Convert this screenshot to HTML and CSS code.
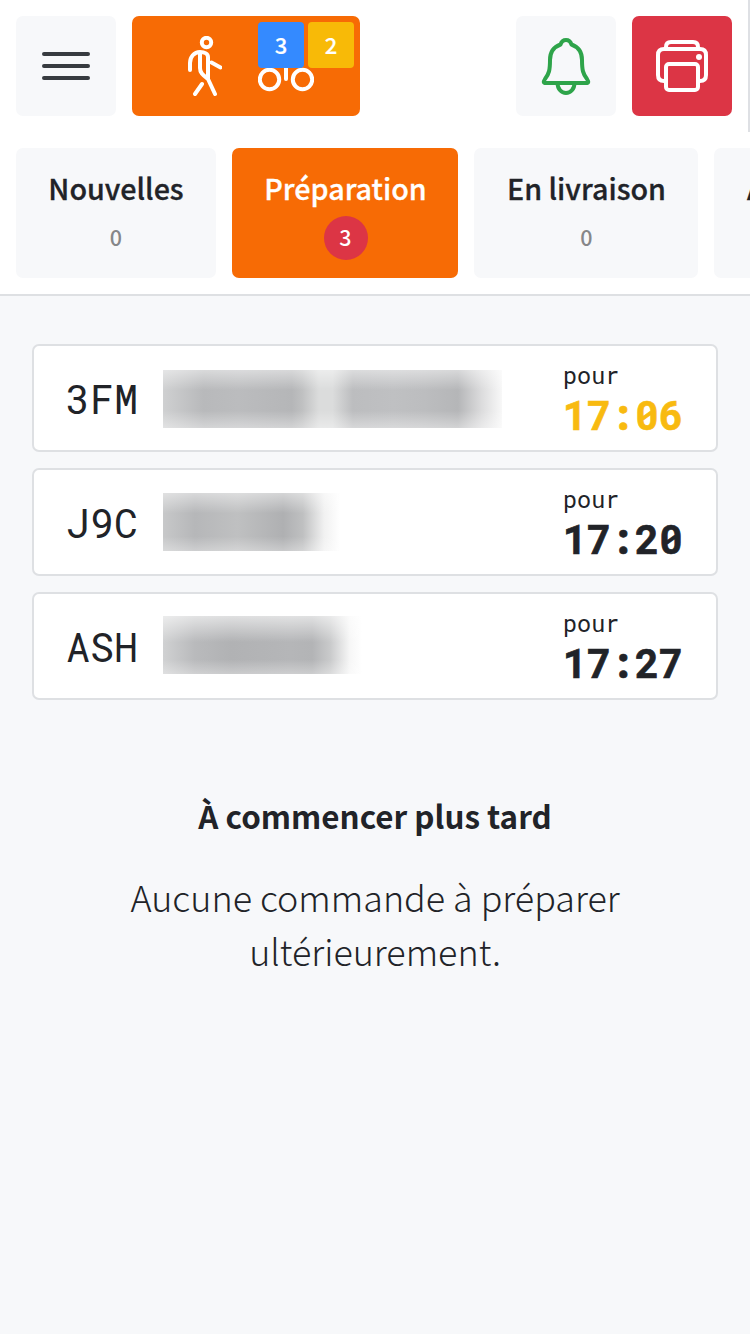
FILE: index.html
```html
<!DOCTYPE html>
<html lang="fr">
<head>
  <meta charset="utf-8">
  <title>Commandes</title>
  <link rel="stylesheet" href="styles.css">
</head>
<body>
  <header class="topbar">
    <button class="btn">
      <svg width="60" height="60" viewBox="0 0 60 60" class="icon menu-icon">
        <path d="M8 18h44M8 30h44M8 42h44"/>
      </svg>
    </button>
    <button class="btn modes">
      <svg width="34" height="60" viewBox="0 0 34 60" class="icon">
        <circle cx="18.500" cy="6.500" r="4.700"/>
        <path d="M2 34v-7c0-6 4-11 10-11 5 0 8 2 8 5v22l7 15M12 17v15c0 5 3 7 8 11M14 48l-7 10M23.500 26.500l9 5"/>
      </svg>
      <svg width="56" height="60" viewBox="0 0 56 60" class="icon bike-icon">
        <circle cx="11.500" cy="43.500" r="9.700"/>
        <circle cx="44.500" cy="43.500" r="9.700"/>
        <path d="M28 28v15"/>
      </svg>
      <span class="counts">
        <span class="count blue">3</span>
        <span class="count yellow">2</span>
      </span>
    </button>
    <button class="btn bell">
      <svg width="50" height="58" viewBox="0 0 50 58" class="icon bell-icon">
        <path d="M25 3c-2.500 0-4.500 1.500-5.500 4.500C12.500 10 9 16 9 23c0 10-1 14-5 19-2 3-1.500 4 1 4h40c2.500 0 3-1 1-4-4-5-5-9-5-19 0-7-3.500-13-10.500-15.500C29.500 4.500 27.500 3 25 3zM16.500 46c0 6 4 10 8.500 10s8.500-4 8.500-10"/>
      </svg>
    </button>
    <button class="btn printer">
      <svg width="52" height="52" viewBox="0 0 52 52" class="icon">
        <path d="M10 9V7q0-5 5-5h22q5 0 5 5v2M9 41H8q-6 0-6-6V15q0-6 6-6h36q6 0 6 6v20q0 6-6 6h-1"/>
        <rect x="10" y="24" width="32" height="26" rx="3"/>
        <circle cx="43" cy="17" r="3" class="dot"/>
      </svg>
    </button>
    <div class="edge"></div>
  </header>

  <nav class="tabs">
    <div class="tab"><span class="tab-name">Nouvelles</span><span class="tab-count">0</span></div>
    <div class="tab active"><span class="tab-name">Préparation</span><span class="tab-count">3</span></div>
    <div class="tab wide"><span class="tab-name">En livraison</span><span class="tab-count">0</span></div>
    <div class="tab last"><span class="tab-name">A</span></div>
  </nav>

  <main class="orders">
    <div class="order">
      <span class="code">3FM</span>
      <span class="customer customer-long"></span>
      <div class="due"><span class="for">pour</span><span class="time late">17:06</span></div>
    </div>
    <div class="order">
      <span class="code">J9C</span>
      <span class="customer customer-short"></span>
      <div class="due"><span class="for">pour</span><span class="time">17:20</span></div>
    </div>
    <div class="order">
      <span class="code">ASH</span>
      <span class="customer customer-medium"></span>
      <div class="due"><span class="for">pour</span><span class="time">17:27</span></div>
    </div>
    <h2 class="later-title">À commencer plus tard</h2>
    <p class="later-text">Aucune commande à préparer ultérieurement.</p>
  </main>
</body>
</html>
```
FILE: styles.css
```css
* {
  box-sizing: border-box;
}
body {
  margin: 0;
  height: 1334px;
  overflow: hidden;
  background: #f7f8fa;
  color: #212328;
  font-family: "Noto Sans CJK SC", "Open Sans", sans-serif;
}
.topbar {
  display: flex;
  gap: 16px;
  height: 132px;
  padding: 16px 0 0 16px;
  background: white;
}
.btn {
  position: relative;
  display: flex;
  align-items: center;
  justify-content: center;
  width: 100px;
  height: 100px;
  padding: 0;
  border: none;
  border-radius: 7px;
  background: #f7f8fa;
  color: white;
  font-family: inherit;
}
.icon {
  fill: none;
  stroke: white;
  stroke-width: 4;
  stroke-linecap: round;
  stroke-linejoin: round;
}
.menu-icon {
  stroke: #373b40;
}
.modes {
  width: 228px;
  justify-content: flex-start;
  gap: 36px;
  padding-left: 56px;
  background: #f76b05;
}
.counts {
  position: absolute;
  top: 6px;
  right: 6px;
  display: flex;
  gap: 4px;
}
.count {
  width: 46px;
  height: 46px;
  border-radius: 4px;
  font-size: 22px;
  font-weight: 500;
  line-height: 44px;
  text-align: center;
  -webkit-text-stroke: 0.2px;
}
.blue {
  background: #348aff;
}
.yellow {
  background: #f8ba07;
}
.bell {
  margin-left: auto;
}
.bell-icon {
  stroke: #2ea44a;
}
.printer {
  background: #dc3545;
}
.dot {
  fill: white;
  stroke: none;
}
.edge {
  width: 2px;
  height: 132px;
  margin-top: -16px;
  background: #dee0e4;
}
.tabs {
  display: flex;
  gap: 16px;
  height: 164px;
  padding: 16px 0 16px 16px;
  overflow: hidden;
  background: white;
  border-bottom: 2px solid #dee0e3;
}
.tab {
  display: flex;
  flex: 0 0 200px;
  flex-direction: column;
  align-items: center;
  height: 130px;
  padding-top: 20px;
  border-radius: 7px;
  background: #f7f8fa;
  white-space: nowrap;
}
.tab-name {
  height: 48px;
  font-size: 28.7px;
  font-weight: 500;
  line-height: 39px;
  -webkit-text-stroke: 0.3px;
}
.tab-count {
  width: 44px;
  height: 44px;
  border-radius: 22px;
  color: #868789;
  font-size: 21.5px;
  font-weight: 500;
  line-height: 41px;
  text-align: center;
}
.tab.active {
  flex-basis: 226px;
  padding-left: 1px;
  background: #f76b05;
  color: white;
}
.tab.wide {
  flex-basis: 224px;
  padding-left: 1px;
}
.tab.last {
  align-items: flex-start;
  padding-left: 33px;
}
.active .tab-count {
  background: #dc3545;
  color: white;
}
.orders {
  display: flex;
  flex-direction: column;
  gap: 16px;
  padding: 48px 32px;
}
.order {
  display: flex;
  align-items: center;
  height: 108px;
  padding: 0 32px;
  border: 2px solid #dee0e3;
  border-radius: 7px;
  background: white;
}
.code {
  width: 97px;
  padding-top: 2px;
  font-family: "Roboto Mono", "DejaVu Sans Mono", monospace;
  font-size: 40px;
  line-height: 52px;
}
/* obscured customer names */
.customer {
  height: 58px;
}
.customer-long {
  width: 339px;
  margin-top: 2px;
  background: linear-gradient(#fff7, #fff0 35%, #fff0 70%, #fff6), linear-gradient(90deg, #cfd0d1, #b8b9bb 12%, #bbbcbe 22%, #b5b6b8 38%, #bfc0c1 41%, #dbdcdc 46%, #dbdcdc 50%, #bcbdbf 56%, #bfc0c2 68%, #bcbdbf 77%, #b5b6b8 87%, #dcdcdd 94%, #f8f8f8);
}
.customer-short {
  width: 177px;
  background: linear-gradient(#fff7, #fff0 35%, #fff0 75%, #fff5), linear-gradient(90deg, #c7c8c9, #b6b7b9 18%, #bfc0c1 42%, #afb0b2 68%, #bfc0c1 79%, #f1f1f1 91%, #fff);
}
.customer-medium {
  width: 199px;
  margin-top: -2px;
  background: linear-gradient(#fff9, #fff0 45%, #fff0 75%, #fff5), linear-gradient(90deg, #d0d1d2, #b9babc 16%, #b1b2b4 34%, #b5b6b8 64%, #b3b4b6 75%, #c9cacb 84%, #f7f7f7 94%, #fff);
}
.due {
  display: flex;
  flex-direction: column;
  width: 121px;
  margin: -2px 0 0 auto;
  font-family: "Roboto Mono", "DejaVu Sans Mono", monospace;
}
.for {
  font-size: 23.5px;
  line-height: 36px;
}
.time {
  font-size: 40px;
  font-weight: 700;
  line-height: 44px;
  -webkit-text-stroke: 0.7px;
}
.late {
  color: #f8ba10;
}
.later-title {
  margin: 74px 0 0;
  font-size: 31.4px;
  font-weight: 700;
  line-height: 52px;
  text-align: center;
}
.later-text {
  margin: 11px auto 0;
  width: 520px;
  font-size: 35.9px;
  font-weight: 300;
  line-height: 54px;
  text-align: center;
}
```
